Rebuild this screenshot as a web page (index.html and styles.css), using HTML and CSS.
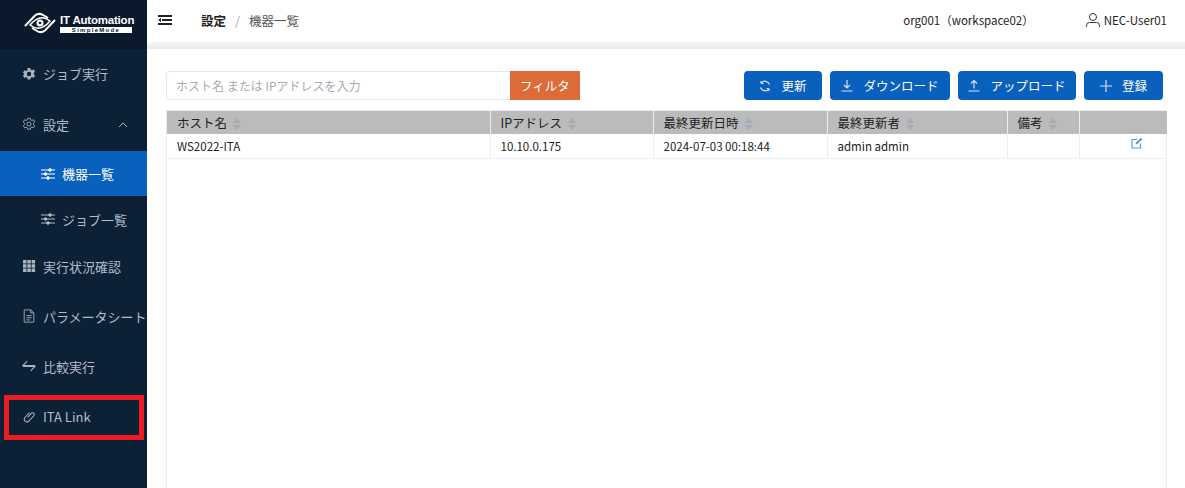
FILE: index.html
```html
<!DOCTYPE html>
<html lang="ja">
<head>
<meta charset="utf-8">
<title>機器一覧</title>
<link rel="stylesheet" href="styles.css">
</head>
<body>
<div class="app">
  <aside class="side">
    <div class="logo">
      <svg class="logo-mark" viewBox="0 0 32 22" width="32" height="22" fill="none" stroke="#fff">
        <path d="M1 14 L11 3.500 Q15 0.500 19 3 L24 6" stroke-width="2"/>
        <path d="M31 8 L21 18.500 Q17 21.500 13 19 L8 16" stroke-width="2"/>
        <path d="M6 13 Q16 1 26 9 Q16 21 6 13Z" stroke-width="1.500"/>
        <circle cx="16" cy="11" r="3.500" fill="#fff" stroke="none"/>
        <circle cx="16" cy="11" r="1.300" fill="#0a1a2c" stroke="none"/>
      </svg>
      <div class="logo-text">
        <div class="logo-name">IT Automation</div>
        <div class="logo-sub">SimpleMode</div>
      </div>
    </div>
    <nav class="nav">
      <a class="item">
        <svg class="ic" viewBox="0 0 16 16"><path fill="#a9b3be" fill-rule="evenodd" d="M6.400 1h3.200l.4 2 1.500.7 1.800-1 1.600 2.800-1.500 1.300v1.600l1.500 1.300-1.600 2.800-1.800-1-1.500.7-.4 2H6.400l-.4-2-1.500-.7-1.800 1-1.600-2.800 1.500-1.300V7.800L1.100 6.500l1.600-2.800 1.800 1 1.500-.7zM8 5.500a2.500 2.500 0 1 0 0 5 2.500 2.500 0 0 0 0-5z"/></svg>
        <span>ジョブ実行</span>
      </a>
      <a class="item">
        <svg class="ic" viewBox="0 0 16 16" fill="none" stroke="#a9b3be"><path d="M6.500 1.500h3l.4 1.800 1.500.7 1.600-.9 1.500 2.600-1.400 1.200v1.700l1.400 1.200-1.500 2.600-1.600-.9-1.500.7-.4 1.800h-3l-.4-1.800-1.500-.7-1.600.9-1.500-2.600 1.400-1.200V7.100L1.500 5.700 3 3.100l1.600.9 1.500-.7z"/><circle cx="8" cy="8" r="2.300"/></svg>
        <span>設定</span>
        <svg class="chev" viewBox="0 0 10 6" fill="none" stroke="#a9b3be"><path d="M1 5l4-4 4 4"/></svg>
      </a>
      <a class="item sub active">
        <svg class="ic-sub" viewBox="0 0 14 12" fill="none" stroke="currentColor"><path d="M0 2h14M0 6h14M0 10h14"/><circle cx="9" cy="2" r="1.300" fill="currentColor"/><circle cx="4.500" cy="6" r="1.300" fill="currentColor"/><circle cx="7" cy="10" r="1.300" fill="currentColor"/></svg>
        <span>機器一覧</span>
      </a>
      <a class="item sub">
        <svg class="ic-sub" viewBox="0 0 14 12" fill="none" stroke="currentColor"><path d="M0 2h14M0 6h14M0 10h14"/><circle cx="9" cy="2" r="1.300" fill="currentColor"/><circle cx="4.500" cy="6" r="1.300" fill="currentColor"/><circle cx="7" cy="10" r="1.300" fill="currentColor"/></svg>
        <span>ジョブ一覧</span>
      </a>
      <a class="item">
        <svg class="ic" viewBox="0 0 14 14" fill="#a9b3be"><path d="M1 1h3.500v3.500H1zM5.300 1h3.500v3.500H5.300zM9.600 1h3.500v3.500H9.600zM1 5.300h3.500v3.500H1zM5.300 5.300h3.500v3.500H5.300zM9.600 5.300h3.500v3.500H9.600zM1 9.600h3.500v3.500H1zM5.300 9.600h3.500v3.500H5.300zM9.600 9.600h3.500v3.500H9.600z"/></svg>
        <span>実行状況確認</span>
      </a>
      <a class="item">
        <svg class="ic" viewBox="0 0 14 16" fill="none" stroke="#a9b3be"><path d="M1.500 1h7.500l3.500 3.500v10.500h-11z"/><path d="M9 1v3.500h3.500M4 7.500h6M4 10h6M4 12.500h4"/></svg>
        <span>パラメータシート</span>
      </a>
      <a class="item">
        <svg class="ic" viewBox="0 0 16 16" fill="none" stroke="#a9b3be" stroke-width="1.200"><path d="M6 2.500L1 7.500h14M10 13.500l5-5H1" transform="translate(0 0)"/></svg>
        <span>比較実行</span>
      </a>
      <a class="item link">
        <svg class="ic" viewBox="0 0 16 16" fill="none" stroke="#a9b3be" stroke-width="1.200"><path d="M6.500 9.500l4-4.500a2 2 0 0 1 3 2.700l-6 6.300a3 3 0 0 1-4.400-4L8.500 4"/></svg>
        <span>ITA Link</span>
        <div class="marker"></div>
      </a>
    </nav>
  </aside>
  <div class="main">
    <header class="top">
      <svg class="burger" viewBox="0 0 14 10" fill="#222"><path d="M0 0h14v2H0zM4 4h10v2H4zM0 8h14v2H0zM0 5l3-2v4z"/></svg>
      <div class="crumb"><b>設定</b><i>/</i><span>機器一覧</span></div>
      <div class="org">org001（workspace02）</div>
      <div class="user">
        <svg viewBox="0 0 16 16" width="16" height="16" fill="none" stroke="#333"><circle cx="8" cy="5" r="3.500"/><path d="M1.500 15v-1.500a3 3 0 0 1 3-3h7a3 3 0 0 1 3 3V15"/></svg>
        <span>NEC-User01</span>
      </div>
    </header>
    <div class="shade"></div>
    <section class="content">
      <div class="toolbar">
        <div class="filter">
          <input class="search" type="text" placeholder="ホスト名 または IPアドレスを入力">
          <button class="filter-btn">フィルタ</button>
        </div>
        <div class="actions">
          <button class="btn w78"><svg viewBox="0 0 12 12" fill="none" stroke="#d5e3f3" stroke-width="1.200"><path d="M10.500 4.500A5 5 0 0 0 2 3M1.500 7.500A5 5 0 0 0 10 9"/><path d="M2 1v2.500h2.500M10 11V8.500H7.500" stroke-width="1"/></svg><span>更新</span></button>
          <button class="btn w120"><svg viewBox="0 0 12 12" fill="none" stroke="#d5e3f3" stroke-width="1.200"><path d="M6 0v7.500M3 5l3 3 3-3M.5 11h11"/></svg><span>ダウンロード</span></button>
          <button class="btn w118"><svg viewBox="0 0 12 12" fill="none" stroke="#d5e3f3" stroke-width="1.200"><path d="M6 8.500V1M3 3.500l3-3 3 3M.5 11h11"/></svg><span>アップロード</span></button>
          <button class="btn w79"><svg viewBox="0 0 12 12" fill="none" stroke="#d5e3f3" stroke-width="1.200"><path d="M6 0v12M0 6h12"/></svg><span>登録</span></button>
        </div>
      </div>
      <div class="table-wrap">
        <table class="table">
          <colgroup>
            <col class="c1"><col class="c2"><col class="c3"><col class="c4"><col class="c5"><col class="c6">
          </colgroup>
          <thead>
            <tr>
              <th>ホスト名<em class="sort"></em></th>
              <th>IPアドレス<em class="sort"></em></th>
              <th>最終更新日時<em class="sort"></em></th>
              <th>最終更新者<em class="sort"></em></th>
              <th>備考<em class="sort"></em></th>
              <th></th>
            </tr>
          </thead>
          <tbody>
            <tr>
              <td>WS2022-ITA</td>
              <td>10.10.0.175</td>
              <td>2024-07-03 00:18:44</td>
              <td>admin admin</td>
              <td></td>
              <td class="edit"><svg viewBox="0 0 12 12" width="12" height="12" fill="none" stroke="#5b9bd5" stroke-width="1.200"><path d="M9.500 6.500V11H1V2.500h5"/><path d="M4.500 7.500l.5-2L10 .8l1.400 1.400L6.500 7z" fill="#5b9bd5" stroke="none"/></svg></td>
            </tr>
          </tbody>
        </table>
      </div>
    </section>
  </div>
</div>
</body>
</html>
```
FILE: styles.css
```css
* { box-sizing: border-box; }
html, body { margin: 0; height: 100%; overflow: hidden; }
body {
  font-family: "Noto Sans CJK JP", "Noto Sans", sans-serif;
  font-size: 12px;
  color: #222;
  background: #fff;
}
.app { display: flex; height: 488px; }

.side { width: 147px; flex: none; background: #0c2036; display: flex; flex-direction: column; }
.logo {
  height: 49px;
  background: #0a1a2c;
  display: flex;
  align-items: center;
  padding-left: 24px;
  gap: 4px;
  padding-bottom: 3px;
}
.logo-mark { flex: none; }
.logo-text { width: 72px; }
.logo-name {
  font-family: "Liberation Sans", sans-serif;
  font-weight: 700;
  font-size: 11.500px;
  line-height: 12px;
  color: #fff;
  white-space: nowrap;
  letter-spacing: -0.200px;
}
.logo-sub {
  margin-top: 1px;
  background: #fff;
  color: #0a1a2c;
  font-family: "Liberation Sans", sans-serif;
  font-size: 6px;
  font-weight: 700;
  line-height: 6px;
  height: 6px;
  text-align: center;
  letter-spacing: 1.300px;
}
.nav { display: flex; flex-direction: column; }
.item {
  height: 50px;
  display: flex;
  align-items: center;
  color: #b3bcc6;
  font-size: 13px;
  padding-left: 22px;
  position: relative;
  padding-bottom: 2px;
}
.item:first-child { height: 51px; }
.item .ic { width: 14px; height: 14px; margin-right: 7px; flex: none; }
.chev { width: 10px; height: 6px; position: absolute; right: 19px; top: 22px; }
.sub { height: 45px; padding-left: 41px; }
.sub.active { background: #0a60bd; color: #fff; height: 45px; margin-top: 1px; }
.item.sub { padding-bottom: 0; }
.ic-sub { width: 14px; height: 12px; margin-right: 7px; flex: none; }
.sub + .sub { height: 46px; }
.link { position: relative; }
.marker {
  position: absolute;
  left: 4px;
  top: 3px;
  width: 140px;
  height: 45px;
  border: 5px solid #ed1c24;
}

.main { flex: 1; min-width: 0; display: flex; flex-direction: column; }
.top { height: 42px; display: flex; align-items: center; padding: 0 18px 2px 11px; }
.burger { width: 14px; height: 10px; flex: none; }
.crumb { margin-left: 29px; display: flex; align-items: center; font-size: 12.500px; color: #555; }
.crumb b { color: #222; font-weight: 700; }
.crumb i { color: #aaa; margin: 0 9px; font-style: normal; }
.org { margin-left: auto; font-size: 11.500px; color: #222; }
.user { margin-left: 51px; display: flex; align-items: center; gap: 3px; color: #222; font-size: 11.500px; }
.shade { height: 7px; background: linear-gradient(#f8f8f8, #e9e9ec); }

.content { flex: 1; padding: 22px 18px 0 19px; display: flex; flex-direction: column; min-height: 0; }
.toolbar { display: flex; justify-content: space-between; height: 29px; padding-right: 4px; }
.filter { display: flex; }
.search {
  width: 344px;
  height: 29px;
  border: 1px solid #e4e7ed;
  border-right: 0;
  border-radius: 4px 0 0 4px;
  padding: 0 9px;
  font: inherit;
  outline: none;
}
.search::placeholder { color: #a8abb2; opacity: 1; }
.filter-btn {
  width: 70px;
  height: 29px;
  border: 0;
  background: #dd6b37;
  color: #fff;
  font: inherit;
  font-size: 12.500px;
  padding: 0;
}
.actions { display: flex; gap: 8px; }
.btn {
  height: 29px;
  border: 0;
  border-radius: 4px;
  background: #0a60bd;
  color: #fff;
  font: inherit;
  font-size: 12.500px;
  display: flex;
  align-items: center;
  justify-content: center;
  gap: 10px;
  padding: 0;
}
.btn svg { width: 12px; height: 12px; flex: none; }
.w78 { width: 78px; }
.w120 { width: 120px; }
.w118 { width: 118px; }
.w79 { width: 79px; }

.table-wrap {
  flex: 1;
  margin-top: 10px;
  border-left: 1px solid #ebeef5;
  border-right: 1px solid #ebeef5;
  width: 1001px;
  min-height: 0;
}
.table { width: 1000px; border-collapse: collapse; table-layout: fixed; }
.c1 { width: 323px; }
.c2 { width: 163px; }
.c3 { width: 174px; }
.c4 { width: 180px; }
.c5 { width: 72px; }
.c6 { width: 88px; }
th {
  height: 23px;
  background: #bbb;
  text-align: left;
  font-weight: 400;
  color: #222;
  font-size: 12.500px;
  padding: 0 0 0 10px;
  border-right: 1px solid #ebeef5;
  border-top: 1px solid #ebeef5;
  white-space: nowrap;
}
th:last-child { border-right: 0; }
td {
  height: 25px;
  padding: 0 0 0 10px;
  border-right: 1px solid #ebeef5;
  border-bottom: 1px solid #ebeef5;
  font-size: 11.500px;
  color: #222;
  white-space: nowrap;
}
td:last-child { border-right: 0; }
.edit { padding: 0 24px 4px 0; text-align: right; }
.sort { display: inline-block; width: 8px; height: 12px; margin-left: 6px; vertical-align: -2px; position: relative; }
.sort::before, .sort::after {
  content: "";
  position: absolute;
  left: 0;
  border-left: 4px solid transparent;
  border-right: 4px solid transparent;
}
.sort::before { top: 0; border-bottom: 5px solid #a8abb2; }
.sort::after { bottom: 0; border-top: 5px solid #a8abb2; }
```
